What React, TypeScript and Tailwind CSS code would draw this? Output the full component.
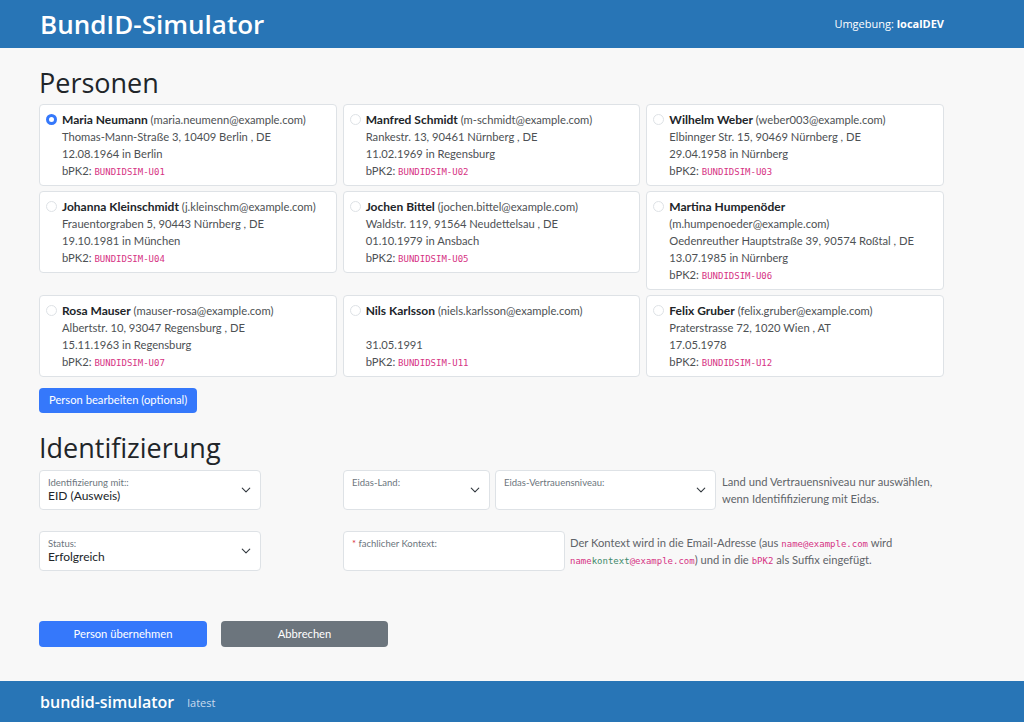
import React, { useState } from "react";

type Person = {
  id: string;
  name: string;
  email: string;
  address: string;
  birth: string;
};

const persons: Person[] = [
  { id: "U01", name: "Maria Neumann", email: "maria.neumenn@example.com", address: "Thomas-Mann-Straße 3, 10409 Berlin , DE", birth: "12.08.1964 in Berlin" },
  { id: "U02", name: "Manfred Schmidt", email: "m-schmidt@example.com", address: "Rankestr. 13, 90461 Nürnberg , DE", birth: "11.02.1969 in Regensburg" },
  { id: "U03", name: "Wilhelm Weber", email: "weber003@example.com", address: "Elbinnger Str. 15, 90469 Nürnberg , DE", birth: "29.04.1958 in Nürnberg" },
  { id: "U04", name: "Johanna Kleinschmidt", email: "j.kleinschm@example.com", address: "Frauentorgraben 5, 90443 Nürnberg , DE", birth: "19.10.1981 in München" },
  { id: "U05", name: "Jochen Bittel", email: "jochen.bittel@example.com", address: "Waldstr. 119, 91564 Neudettelsau , DE", birth: "01.10.1979 in Ansbach" },
  { id: "U06", name: "Martina Humpenöder", email: "m.humpenoeder@example.com", address: "Oedenreuther Hauptstraße 39, 90574 Roßtal , DE", birth: "13.07.1985 in Nürnberg" },
  { id: "U07", name: "Rosa Mauser", email: "mauser-rosa@example.com", address: "Albertstr. 10, 93047 Regensburg , DE", birth: "15.11.1963 in Regensburg" },
  { id: "U11", name: "Nils Karlsson", email: "niels.karlsson@example.com", address: "", birth: "31.05.1991" },
  { id: "U12", name: "Felix Gruber", email: "felix.gruber@example.com", address: "Praterstrasse 72, 1020 Wien , AT", birth: "17.05.1978" },
];

function Chevron() {
  return (
    <svg width="10" height="10" viewBox="0 0 16 16" className="shrink-0">
      <path d="M2 5l6 6 6-6" fill="none" stroke="#343a40" strokeWidth="1.8" strokeLinecap="round" strokeLinejoin="round" />
    </svg>
  );
}

function FloatSelect({ label, value, width }: { label: string; value?: string; width: string }) {
  return (
    <div className={`${width} shrink-0 h-[40px] bg-white border border-[#dee2e6] rounded-[4px] flex items-center pl-[8px] pr-[9px]`}>
      <div className="flex-1 flex flex-col self-start pt-[5px]">
        <span className="text-[9.5px] leading-[13px] text-[#6c757d]">{label}</span>
        <span className="text-[12px] leading-[13px] text-[#212529]">{value}</span>
      </div>
      <Chevron />
    </div>
  );
}

function Code({ children }: { children: React.ReactNode }) {
  return (
    <code className="font-['DejaVu_Sans_Mono',monospace] text-[9px] leading-none text-[#d63384]">{children}</code>
  );
}

function PersonCard({ p, checked, onSelect }: { p: Person; checked: boolean; onSelect: () => void }) {
  return (
    <div
      onClick={onSelect}
      className="bg-white border border-[#dee2e6] rounded-[4px] py-[6px] pl-[6px] pr-[6px] flex cursor-pointer"
    >
      <div className="w-[11px] h-[17px] flex items-center justify-center shrink-0 mr-[5px]">
        {checked ? (
          <span className="w-[11px] h-[11px] rounded-full bg-white border-[3px] border-[#3578fb]" />
        ) : (
          <span className="w-[11px] h-[11px] rounded-full bg-white border border-[#dee2e6]" />
        )}
      </div>
      <div className="text-[11.2px] leading-[17px] text-[#4d5154]">
        <div>
          <span className="text-[12px] font-bold text-[#212529]">{p.name}</span> ({p.email})
        </div>
        <div className="min-h-[17px]">{p.address}</div>
        <div>{p.birth}</div>
        <div>
          bPK2: <Code>BUNDIDSIM-{p.id}</Code>
        </div>
      </div>
    </div>
  );
}

export default function App() {
  const [selected, setSelected] = useState("U01");

  return (
    <div className="min-h-screen flex flex-col bg-[#f8f8f8] font-['Lato',sans-serif] text-[#212529]">
      {/* HEADER */}
      <header className="bg-[#2875b6] h-[48px] flex items-center justify-between px-[40px] pr-[80px] font-['Open_Sans',sans-serif]">
        <div className="text-white text-[26px] font-semibold leading-none">BundID-Simulator</div>
        <div className="text-white text-[11px]">
          Umgebung: <span className="font-bold">localDEV</span>
        </div>
      </header>

      <main className="flex-1 pl-[39px] pr-[80px] pt-[18px] pb-[34px]">
        <h1 className="font-['Open_Sans',sans-serif] text-[27px] font-medium leading-[34px] mb-[4px]">Personen</h1>

        <div className="grid grid-cols-3 gap-x-[6px] gap-y-[5px] items-start w-[905px]">
          {persons.map((p) => (
            <PersonCard key={p.id} p={p} checked={selected === p.id} onSelect={() => setSelected(p.id)} />
          ))}
        </div>

        <button className="mt-[11px] h-[25px] px-[10px] bg-[#3578fb] text-white text-[11.2px] rounded-[4px]">
          Person bearbeiten (optional)
        </button>

        <h1 className="font-['Open_Sans',sans-serif] text-[27px] font-medium leading-[34px] mt-[18px] mb-[5px]">
          Identifizierung
        </h1>

        <div className="flex items-center">
          <div className="w-[304px] shrink-0">
            <FloatSelect label="Identifizierung mit::" value="EID (Ausweis)" width="w-[222px]" />
          </div>
          <FloatSelect label="Eidas-Land:" width="w-[147px]" />
          <div className="w-[5px] shrink-0" />
          <FloatSelect label="Eidas-Vertrauensniveau:" width="w-[221px]" />
          <p className="flex-1 ml-[6px] text-[11.2px] leading-[17px] text-[#5f6469]">
            Land und Vertrauensniveau nur auswählen, wenn Identififizierung mit Eidas.
          </p>
        </div>

        <div className="flex items-center mt-[21px]">
          <div className="w-[304px] shrink-0">
            <FloatSelect label="Status:" value="Erfolgreich" width="w-[222px]" />
          </div>
          <div className="w-[222px] shrink-0 h-[40px] bg-white border border-[#dee2e6] rounded-[4px] pl-[8px] pt-[5px]">
            <div className="text-[9.5px] leading-[13px] text-[#6c757d]">
              <span className="text-[#dc3545]">*</span> fachlicher Kontext:
            </div>
          </div>
          <p className="flex-1 ml-[5px] text-[11.2px] leading-[17px] text-[#5f6469]">
            Der Kontext wird in die Email-Adresse (aus <Code>name@example.com</Code> wird{" "}
            <Code>
              name<span className="text-[#3f8a6b]">kontext</span>@example.com
            </Code>
            ) und in die <Code>bPK2</Code> als Suffix eingefügt.
          </p>
        </div>

        <div className="flex gap-[14px] mt-[50px]">
          <button className="w-[168px] h-[26px] bg-[#3578fb] text-white text-[11.2px] rounded-[4px]">Person übernehmen</button>
          <button className="w-[167px] h-[26px] bg-[#6c757d] text-white text-[11.2px] rounded-[4px]">Abbrechen</button>
        </div>
      </main>

      {/* FOOTER */}
      <footer className="bg-[#2875b6] h-[41px] flex items-center px-[40px] font-['Open_Sans',sans-serif]">
        <span className="text-white text-[16px] font-semibold">bundid-simulator</span>
        <span className="ml-[13px] mt-[3px] text-[11px] text-[#c9dbef]">latest</span>
      </footer>
    </div>
  );
}
